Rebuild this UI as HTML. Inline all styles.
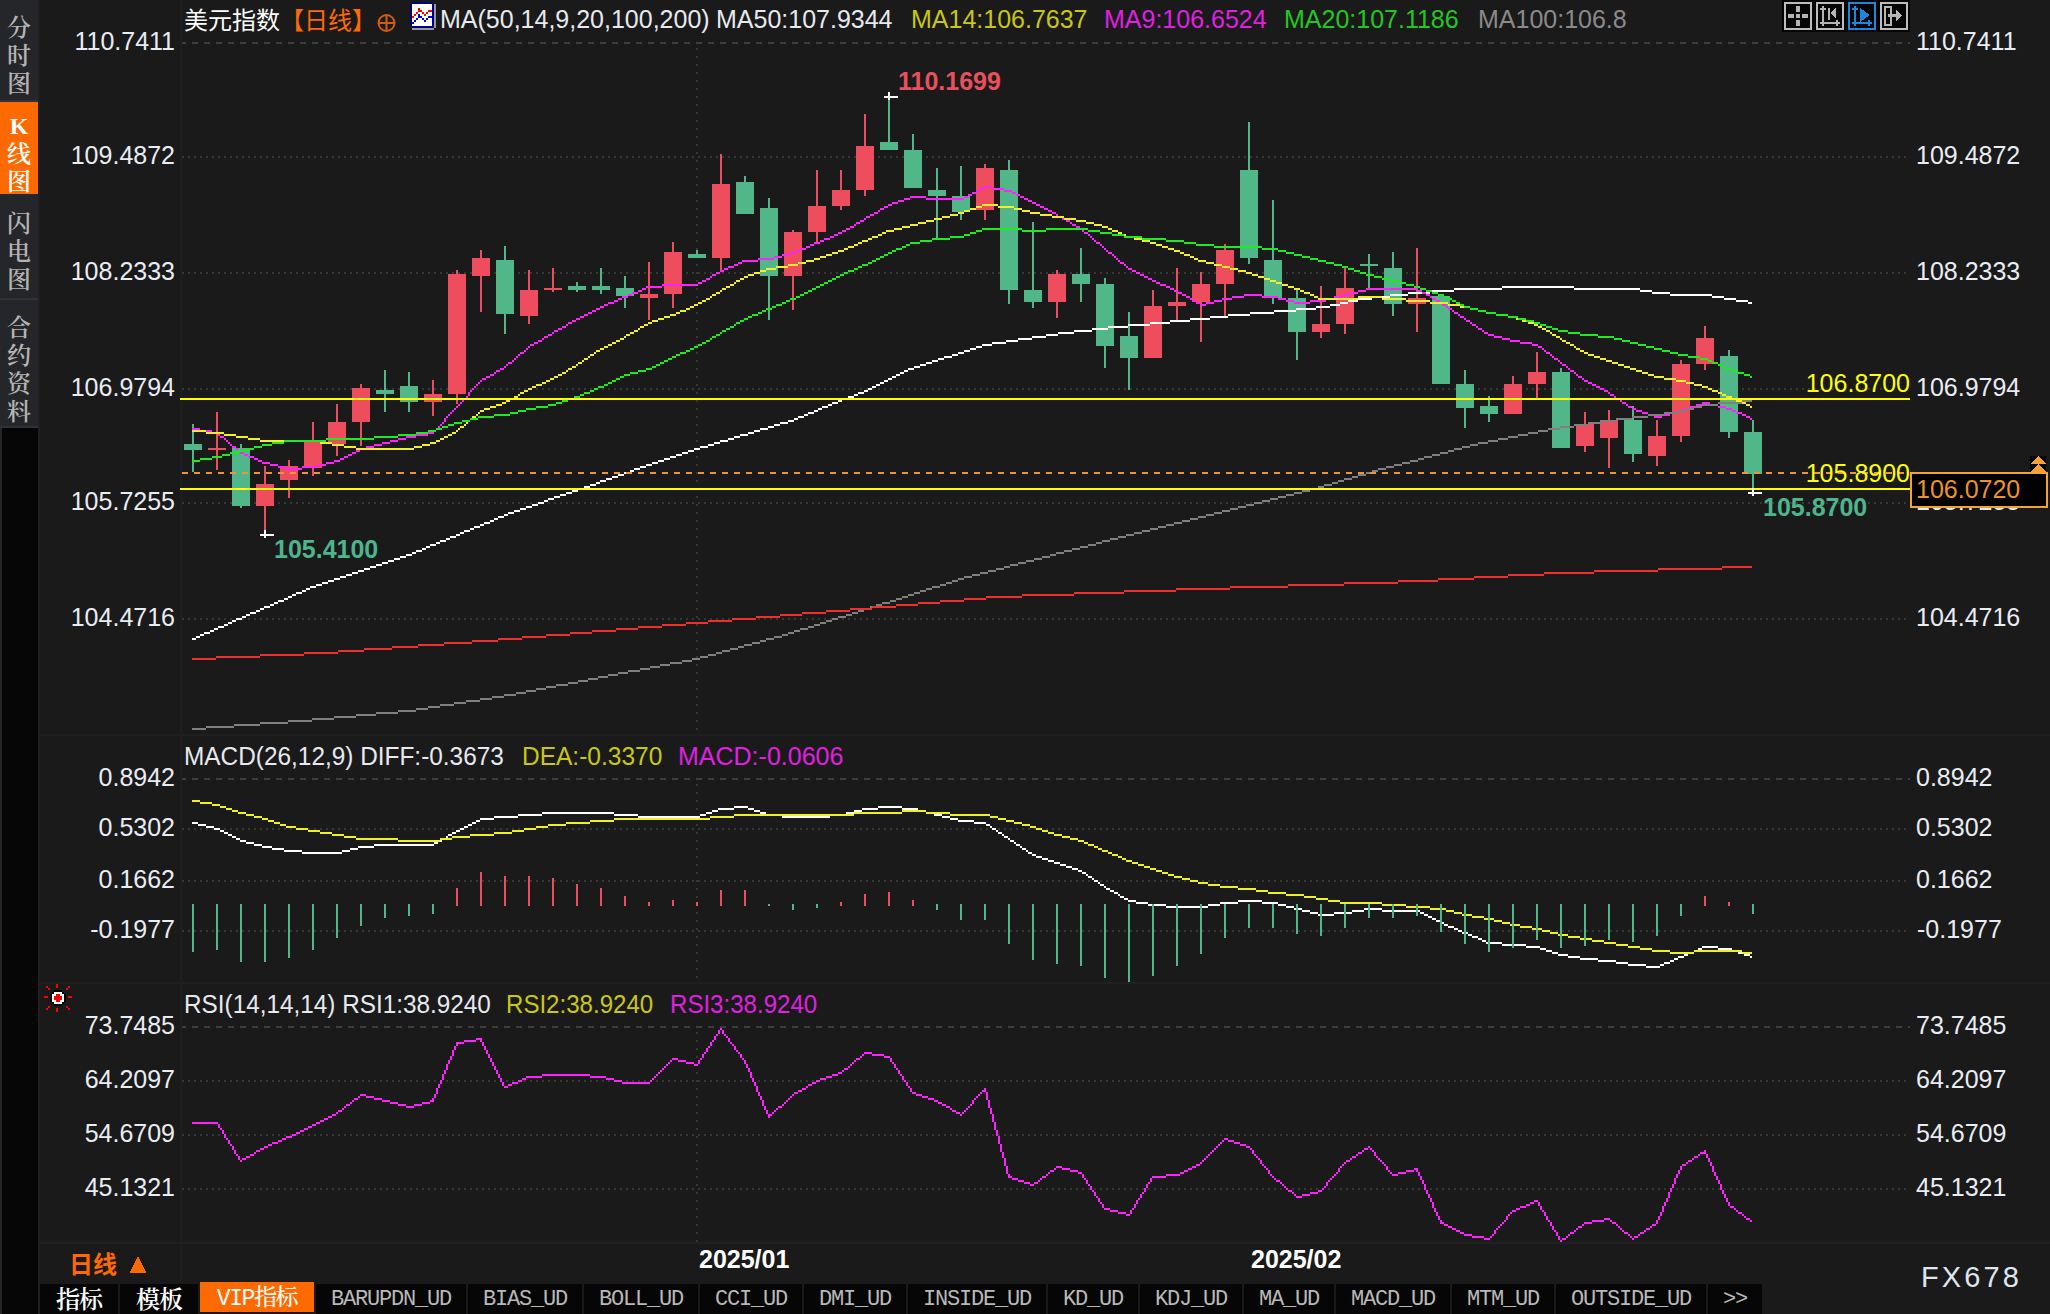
<!DOCTYPE html>
<html lang="zh-CN">
<head>
<meta charset="utf-8">
<title>美元指数 日线</title>
<style>
html,body{margin:0;padding:0;background:#1a1a1a;}
body{width:2050px;height:1314px;position:relative;overflow:hidden;font-family:"Liberation Sans","Noto Sans CJK SC",sans-serif;}
#side{position:absolute;left:0;top:0;width:38px;height:1314px;background:#25262a;border-right:2px solid #202020;}
#side .blk{position:absolute;left:2px;top:428px;width:36px;height:886px;background:#060606;}
.sb{position:absolute;left:0;width:38px;background:#25262a;border-bottom:2px solid #303136;}
.sb.act{background:#ff6a00;border-bottom:none;}
.vg{position:absolute;left:0;width:38px;line-height:28px;text-align:center;font-size:24px;font-weight:600;word-break:break-all;overflow-wrap:anywhere;font-family:"Liberation Serif","Noto Serif CJK SC",serif;}
svg{position:absolute;left:0;top:0;}
svg text{font-family:"Liberation Sans","Noto Sans CJK SC",sans-serif;}
#chart{shape-rendering:crispEdges;}
#bar{position:absolute;left:40px;top:1282px;width:2010px;height:32px;background:#1a1a1a;}
.tab{position:absolute;top:1284px;height:30px;line-height:32px;text-align:center;background:#060606;color:#b8b8b8;white-space:nowrap;overflow:hidden;}
.tab.en,.mono{font-family:"Liberation Mono","Noto Sans CJK SC",monospace;font-size:22px;letter-spacing:-1.2px;}
.tab.cn{font-family:"Liberation Serif","Noto Serif CJK SC",serif;font-size:24px;font-weight:600;color:#fff;letter-spacing:-1px;}
.tab.vip{top:1282px;height:30px;line-height:35px;background:#ff6a00;color:#fff;font-family:"Liberation Mono","Noto Serif CJK SC",serif;font-size:23px;font-weight:500;letter-spacing:-1.4px;}
#title{position:absolute;left:184px;top:3.5px;height:34px;line-height:34px;font-size:24px;color:#fff;white-space:nowrap;font-family:"Liberation Sans","Noto Sans CJK SC",sans-serif;}
#title b{font-weight:normal;color:#ff6a00;}
#period{position:absolute;left:69px;top:1248px;height:34px;line-height:34px;font-size:24px;font-weight:bold;color:#ff6a00;font-family:"Liberation Sans","Noto Sans CJK SC",sans-serif;}
#pbox{position:absolute;left:1910px;top:472px;width:130px;height:32px;border:2px solid #f4a236;background:#000;color:#ee9228;font-size:25px;line-height:31px;padding-left:4px;box-sizing:content-box;}
#wm{position:absolute;left:1921px;top:1257px;font-size:29px;letter-spacing:3.1px;color:#dfe5ee;line-height:40px;}
</style>
</head>
<body>
<div id="side"><div class="blk"></div>
<div class="sb" style="top:0;height:100px"></div>
<div class="sb act" style="top:102px;height:92px"></div>
<div class="sb" style="top:196px;height:102px"></div>
<div class="sb" style="top:300px;height:126px"></div>
<div class="vg" style="top:13.5px;color:#b4b4b4">分时图</div>
<div class="vg" style="top:111.5px;color:#ffffff">K线图</div>
<div class="vg" style="top:210.0px;color:#b4b4b4">闪电图</div>
<div class="vg" style="top:313.5px;color:#b4b4b4">合约资料</div>
</div>
<svg id="chart" width="2050" height="1314" viewBox="0 0 2050 1314">
<line x1="180" y1="43" x2="1910" y2="43" stroke="#3d3d3d" stroke-width="2" stroke-dasharray="6 6"/>
<line x1="182" y1="157" x2="1908" y2="157" stroke="#373737" stroke-width="2" stroke-dasharray="2 4"/>
<line x1="182" y1="273" x2="1908" y2="273" stroke="#373737" stroke-width="2" stroke-dasharray="2 4"/>
<line x1="182" y1="389" x2="1908" y2="389" stroke="#373737" stroke-width="2" stroke-dasharray="2 4"/>
<line x1="182" y1="503" x2="1908" y2="503" stroke="#373737" stroke-width="2" stroke-dasharray="2 4"/>
<line x1="182" y1="619" x2="1908" y2="619" stroke="#373737" stroke-width="2" stroke-dasharray="2 4"/>
<line x1="180" y1="779" x2="1910" y2="779" stroke="#3d3d3d" stroke-width="2" stroke-dasharray="6 6"/>
<line x1="182" y1="829" x2="1908" y2="829" stroke="#373737" stroke-width="2" stroke-dasharray="2 4"/>
<line x1="182" y1="881" x2="1908" y2="881" stroke="#373737" stroke-width="2" stroke-dasharray="2 4"/>
<line x1="182" y1="931" x2="1908" y2="931" stroke="#373737" stroke-width="2" stroke-dasharray="2 4"/>
<line x1="180" y1="1027" x2="1910" y2="1027" stroke="#3d3d3d" stroke-width="2" stroke-dasharray="6 6"/>
<line x1="182" y1="1081" x2="1908" y2="1081" stroke="#373737" stroke-width="2" stroke-dasharray="2 4"/>
<line x1="182" y1="1135" x2="1908" y2="1135" stroke="#373737" stroke-width="2" stroke-dasharray="2 4"/>
<line x1="182" y1="1189" x2="1908" y2="1189" stroke="#373737" stroke-width="2" stroke-dasharray="2 4"/>
<line x1="697" y1="48" x2="697" y2="732" stroke="#373737" stroke-width="2" stroke-dasharray="2 6"/>
<line x1="697" y1="784" x2="697" y2="982" stroke="#373737" stroke-width="2" stroke-dasharray="2 6"/>
<line x1="697" y1="1032" x2="697" y2="1242" stroke="#373737" stroke-width="2" stroke-dasharray="2 6"/>
<rect x="40" y="734" width="2010" height="2" fill="#202020"/>
<rect x="40" y="982" width="2010" height="2" fill="#202020"/>
<rect x="40" y="1242" width="2010" height="2" fill="#202020"/>
<rect x="180" y="0" width="2" height="1282" fill="#1e1e1e"/>
<rect x="192" y="424" width="2" height="48" fill="#52b788"/>
<rect x="184" y="444" width="18" height="6" fill="#52b788"/>
<rect x="216" y="412" width="2" height="58" fill="#ee4d5d"/>
<rect x="208" y="448" width="18" height="2" fill="#ee4d5d"/>
<rect x="240" y="444" width="2" height="64" fill="#52b788"/>
<rect x="232" y="448" width="18" height="58" fill="#52b788"/>
<rect x="264" y="466" width="2" height="68" fill="#ee4d5d"/>
<rect x="256" y="484" width="18" height="22" fill="#ee4d5d"/>
<rect x="288" y="460" width="2" height="38" fill="#ee4d5d"/>
<rect x="280" y="466" width="18" height="14" fill="#ee4d5d"/>
<rect x="312" y="422" width="2" height="54" fill="#ee4d5d"/>
<rect x="304" y="442" width="18" height="26" fill="#ee4d5d"/>
<rect x="336" y="404" width="2" height="52" fill="#ee4d5d"/>
<rect x="328" y="422" width="18" height="22" fill="#ee4d5d"/>
<rect x="360" y="384" width="2" height="62" fill="#ee4d5d"/>
<rect x="352" y="388" width="18" height="34" fill="#ee4d5d"/>
<rect x="384" y="370" width="2" height="42" fill="#52b788"/>
<rect x="376" y="390" width="18" height="4" fill="#52b788"/>
<rect x="408" y="372" width="2" height="40" fill="#52b788"/>
<rect x="400" y="386" width="18" height="16" fill="#52b788"/>
<rect x="432" y="380" width="2" height="36" fill="#ee4d5d"/>
<rect x="424" y="394" width="18" height="8" fill="#ee4d5d"/>
<rect x="456" y="270" width="2" height="134" fill="#ee4d5d"/>
<rect x="448" y="274" width="18" height="120" fill="#ee4d5d"/>
<rect x="480" y="250" width="2" height="62" fill="#ee4d5d"/>
<rect x="472" y="258" width="18" height="18" fill="#ee4d5d"/>
<rect x="504" y="246" width="2" height="88" fill="#52b788"/>
<rect x="496" y="260" width="18" height="54" fill="#52b788"/>
<rect x="528" y="270" width="2" height="54" fill="#ee4d5d"/>
<rect x="520" y="290" width="18" height="26" fill="#ee4d5d"/>
<rect x="552" y="268" width="2" height="24" fill="#ee4d5d"/>
<rect x="544" y="288" width="18" height="2" fill="#ee4d5d"/>
<rect x="576" y="282" width="2" height="10" fill="#52b788"/>
<rect x="568" y="286" width="18" height="4" fill="#52b788"/>
<rect x="600" y="268" width="2" height="26" fill="#52b788"/>
<rect x="592" y="286" width="18" height="4" fill="#52b788"/>
<rect x="624" y="276" width="2" height="32" fill="#52b788"/>
<rect x="616" y="288" width="18" height="8" fill="#52b788"/>
<rect x="648" y="262" width="2" height="58" fill="#ee4d5d"/>
<rect x="640" y="294" width="18" height="4" fill="#ee4d5d"/>
<rect x="672" y="242" width="2" height="66" fill="#ee4d5d"/>
<rect x="664" y="252" width="18" height="42" fill="#ee4d5d"/>
<rect x="696" y="250" width="2" height="8" fill="#52b788"/>
<rect x="688" y="254" width="18" height="4" fill="#52b788"/>
<rect x="720" y="154" width="2" height="116" fill="#ee4d5d"/>
<rect x="712" y="184" width="18" height="74" fill="#ee4d5d"/>
<rect x="744" y="176" width="2" height="38" fill="#52b788"/>
<rect x="736" y="182" width="18" height="32" fill="#52b788"/>
<rect x="768" y="198" width="2" height="122" fill="#52b788"/>
<rect x="760" y="208" width="18" height="68" fill="#52b788"/>
<rect x="792" y="230" width="2" height="80" fill="#ee4d5d"/>
<rect x="784" y="232" width="18" height="44" fill="#ee4d5d"/>
<rect x="816" y="170" width="2" height="74" fill="#ee4d5d"/>
<rect x="808" y="206" width="18" height="26" fill="#ee4d5d"/>
<rect x="840" y="170" width="2" height="40" fill="#ee4d5d"/>
<rect x="832" y="190" width="18" height="16" fill="#ee4d5d"/>
<rect x="864" y="114" width="2" height="82" fill="#ee4d5d"/>
<rect x="856" y="146" width="18" height="44" fill="#ee4d5d"/>
<rect x="888" y="94" width="2" height="56" fill="#52b788"/>
<rect x="880" y="142" width="18" height="8" fill="#52b788"/>
<rect x="912" y="134" width="2" height="54" fill="#52b788"/>
<rect x="904" y="150" width="18" height="38" fill="#52b788"/>
<rect x="936" y="168" width="2" height="70" fill="#52b788"/>
<rect x="928" y="190" width="18" height="6" fill="#52b788"/>
<rect x="960" y="166" width="2" height="54" fill="#52b788"/>
<rect x="952" y="196" width="18" height="16" fill="#52b788"/>
<rect x="984" y="164" width="2" height="56" fill="#ee4d5d"/>
<rect x="976" y="168" width="18" height="42" fill="#ee4d5d"/>
<rect x="1008" y="160" width="2" height="144" fill="#52b788"/>
<rect x="1000" y="170" width="18" height="120" fill="#52b788"/>
<rect x="1032" y="222" width="2" height="86" fill="#52b788"/>
<rect x="1024" y="290" width="18" height="12" fill="#52b788"/>
<rect x="1056" y="270" width="2" height="48" fill="#ee4d5d"/>
<rect x="1048" y="274" width="18" height="28" fill="#ee4d5d"/>
<rect x="1080" y="248" width="2" height="54" fill="#52b788"/>
<rect x="1072" y="274" width="18" height="10" fill="#52b788"/>
<rect x="1104" y="278" width="2" height="90" fill="#52b788"/>
<rect x="1096" y="284" width="18" height="62" fill="#52b788"/>
<rect x="1128" y="312" width="2" height="78" fill="#52b788"/>
<rect x="1120" y="336" width="18" height="22" fill="#52b788"/>
<rect x="1152" y="290" width="2" height="68" fill="#ee4d5d"/>
<rect x="1144" y="306" width="18" height="52" fill="#ee4d5d"/>
<rect x="1176" y="268" width="2" height="52" fill="#ee4d5d"/>
<rect x="1168" y="302" width="18" height="4" fill="#ee4d5d"/>
<rect x="1200" y="272" width="2" height="70" fill="#ee4d5d"/>
<rect x="1192" y="284" width="18" height="18" fill="#ee4d5d"/>
<rect x="1224" y="244" width="2" height="72" fill="#ee4d5d"/>
<rect x="1216" y="250" width="18" height="34" fill="#ee4d5d"/>
<rect x="1248" y="122" width="2" height="142" fill="#52b788"/>
<rect x="1240" y="170" width="18" height="88" fill="#52b788"/>
<rect x="1272" y="200" width="2" height="104" fill="#52b788"/>
<rect x="1264" y="260" width="18" height="38" fill="#52b788"/>
<rect x="1296" y="290" width="2" height="70" fill="#52b788"/>
<rect x="1288" y="298" width="18" height="34" fill="#52b788"/>
<rect x="1320" y="286" width="2" height="52" fill="#ee4d5d"/>
<rect x="1312" y="324" width="18" height="8" fill="#ee4d5d"/>
<rect x="1344" y="266" width="2" height="68" fill="#ee4d5d"/>
<rect x="1336" y="288" width="18" height="36" fill="#ee4d5d"/>
<rect x="1368" y="254" width="2" height="34" fill="#52b788"/>
<rect x="1360" y="264" width="18" height="2" fill="#52b788"/>
<rect x="1392" y="252" width="2" height="64" fill="#52b788"/>
<rect x="1384" y="268" width="18" height="36" fill="#52b788"/>
<rect x="1416" y="248" width="2" height="84" fill="#ee4d5d"/>
<rect x="1408" y="298" width="18" height="6" fill="#ee4d5d"/>
<rect x="1440" y="296" width="2" height="88" fill="#52b788"/>
<rect x="1432" y="296" width="18" height="88" fill="#52b788"/>
<rect x="1464" y="370" width="2" height="58" fill="#52b788"/>
<rect x="1456" y="384" width="18" height="24" fill="#52b788"/>
<rect x="1488" y="396" width="2" height="26" fill="#52b788"/>
<rect x="1480" y="406" width="18" height="8" fill="#52b788"/>
<rect x="1512" y="376" width="2" height="38" fill="#ee4d5d"/>
<rect x="1504" y="384" width="18" height="30" fill="#ee4d5d"/>
<rect x="1536" y="352" width="2" height="46" fill="#ee4d5d"/>
<rect x="1528" y="372" width="18" height="12" fill="#ee4d5d"/>
<rect x="1560" y="368" width="2" height="80" fill="#52b788"/>
<rect x="1552" y="372" width="18" height="76" fill="#52b788"/>
<rect x="1584" y="412" width="2" height="40" fill="#ee4d5d"/>
<rect x="1576" y="424" width="18" height="22" fill="#ee4d5d"/>
<rect x="1608" y="410" width="2" height="58" fill="#ee4d5d"/>
<rect x="1600" y="420" width="18" height="18" fill="#ee4d5d"/>
<rect x="1632" y="406" width="2" height="56" fill="#52b788"/>
<rect x="1624" y="420" width="18" height="34" fill="#52b788"/>
<rect x="1656" y="420" width="2" height="46" fill="#ee4d5d"/>
<rect x="1648" y="436" width="18" height="20" fill="#ee4d5d"/>
<rect x="1680" y="360" width="2" height="82" fill="#ee4d5d"/>
<rect x="1672" y="364" width="18" height="72" fill="#ee4d5d"/>
<rect x="1704" y="326" width="2" height="44" fill="#ee4d5d"/>
<rect x="1696" y="338" width="18" height="26" fill="#ee4d5d"/>
<rect x="1728" y="350" width="2" height="88" fill="#52b788"/>
<rect x="1720" y="356" width="18" height="76" fill="#52b788"/>
<rect x="1752" y="420" width="2" height="72" fill="#52b788"/>
<rect x="1744" y="432" width="18" height="42" fill="#52b788"/>
<path transform="scale(2)" d="M96 319.5h2M98 318.5h2M100 317.5h2M102 316.5h3M105 315.5h2M107 314.5h2M109 313.5h3M112 312.5h2M114 311.5h2M116 310.5h2M118 309.5h3M121 308.5h2M123 307.5h2M125 306.5h3M128 305.5h2M130 304.5h2M132 303.5h3M135 302.5h2M137 301.5h2M139 300.5h3M142 299.5h2M144 298.5h2M146 297.5h2M148 296.5h3M151 295.5h2M153 294.5h2M155 293.5h3M158 292.5h3M161 291.5h3M164 290.5h3M167 289.5h3M170 288.5h3M173 287.5h3M176 286.5h3M179 285.5h3M182 284.5h3M185 283.5h3M188 282.5h3M191 281.5h3M194 280.5h3M197 279.5h3M200 278.5h3M203 277.5h3M206 276.5h2M208 275.5h3M211 274.5h2M213 273.5h2M215 272.5h3M218 271.5h2M220 270.5h3M223 269.5h2M225 268.5h3M228 267.5h2M230 266.5h2M232 265.5h3M235 264.5h2M237 263.5h3M240 262.5h2M242 261.5h3M245 260.5h2M247 259.5h2M249 258.5h3M252 257.5h2M254 256.5h3M257 255.5h3M260 254.5h3M263 253.5h3M266 252.5h3M269 251.5h3M272 250.5h2M274 249.5h3M277 248.5h3M280 247.5h3M283 246.5h3M286 245.5h3M289 244.5h3M292 243.5h3M295 242.5h3M298 241.5h2M300 240.5h3M303 239.5h3M306 238.5h3M309 237.5h3M312 236.5h3M315 235.5h2M317 234.5h3M320 233.5h3M323 232.5h3M326 231.5h3M329 230.5h3M332 229.5h3M335 228.5h3M338 227.5h3M341 226.5h3M344 225.5h3M347 224.5h3M350 223.5h4M354 222.5h3M357 221.5h3M360 220.5h4M364 219.5h3M367 218.5h3M370 217.5h4M374 216.5h3M377 215.5h3M380 214.5h4M384 213.5h3M387 212.5h3M390 211.5h4M394 210.5h3M397 209.5h2M399 208.5h3M402 207.5h2M404 206.5h3M407 205.5h2M409 204.5h2M411 203.5h3M414 202.5h2M416 201.5h3M419 200.5h2M421 199.5h3M424 198.5h3M427 197.5h2M429 196.5h3M432 195.5h2M434 194.5h2M436 193.5h2M438 192.5h2M440 191.5h2M442 190.5h2M444 189.5h2M446 188.5h2M448 187.5h2M450 186.5h2M452 185.5h2M454 184.5h3M457 183.5h3M460 182.5h3M463 181.5h3M466 180.5h3M469 179.5h3M472 178.5h4M476 177.5h3M479 176.5h3M482 175.5h3M485 174.5h3M488 173.5h3M491 172.5h5M496 171.5h7M503 170.5h6M509 169.5h7M516 168.5h7M523 167.5h6M529 166.5h8M537 165.5h9M546 164.5h8M554 163.5h10M564 162.5h11M575 161.5h10M585 160.5h10M595 159.5h10M605 158.5h9M614 157.5h11M625 156.5h12M637 155.5h11M648 154.5h10M658 153.5h7M665 152.5h5M670 151.5h4M674 150.5h5M679 149.5h7M686 148.5h9M695 147.5h9M704 146.5h11M715 145.5h12M727 144.5h24M751 143.5h36M787 144.5h33M820 145.5h6M826 146.5h9M835 147.5h21M856 148.5h6M862 149.5h6M868 150.5h6M874 151.5h2" fill="none" stroke="#ffffff" stroke-width="1"/>
<path transform="scale(2)" d="M96 214.5h4M100 215.5h6M106 216.5h3M109 217.5h1M110 218.5h2M112 219.5h1M113 220.5h1M114 221.5h1M115 222.5h1M116 223.5h2M118 224.5h1M119 225.5h1M120 226.5h2M122 227.5h2M124 228.5h3M127 229.5h2M129 230.5h2M131 231.5h4M135 232.5h4M139 233.5h4M143 234.5h8M151 233.5h8M159 232.5h4M163 231.5h4M167 230.5h3M170 229.5h2M172 228.5h2M174 227.5h2M176 226.5h2M178 225.5h2M180 224.5h3M183 223.5h4M187 222.5h4M191 221.5h4M195 220.5h4M199 219.5h4M203 218.5h5M208 217.5h6M214 216.5h3M217 215.5h1M218 214.5h1M219 213.5h1M220 212.5h1M221 211.5h1M222.5 209v2M223 208.5h1M224 207.5h1M225 206.5h1M226 205.5h1M227 204.5h1M228 203.5h1M229 202.5h1M230 201.5h1M231 200.5h1M232 199.5h1M233 198.5h1M234.5 196v2M235 195.5h1M236 194.5h1M237 193.5h1M238 192.5h1M239 191.5h1M240 190.5h1M241 189.5h2M243 188.5h2M245 187.5h2M247 186.5h1M248 185.5h2M250 184.5h2M252 183.5h1M253 182.5h1M254 181.5h2M256 180.5h1M257 179.5h1M258 178.5h1M259 177.5h1M260 176.5h2M262 175.5h1M263 174.5h1M264 173.5h1M265 172.5h2M267 171.5h2M269 170.5h2M271 169.5h1M272 168.5h2M274 167.5h2M276 166.5h1M277 165.5h2M279 164.5h2M281 163.5h2M283 162.5h1M284 161.5h2M286 160.5h2M288 159.5h2M290 158.5h2M292 157.5h2M294 156.5h2M296 155.5h2M298 154.5h2M300 153.5h2M302 152.5h2M304 151.5h3M307 150.5h2M309 149.5h2M311 148.5h3M314 147.5h2M316 146.5h3M319 145.5h2M321 144.5h2M323 143.5h8M331 142.5h18M349 141.5h2M351 140.5h2M353 139.5h2M355 138.5h1M356 137.5h2M358 136.5h2M360 135.5h2M362 134.5h2M364 133.5h3M367 132.5h2M369 131.5h2M371 130.5h8M379 129.5h8M387 128.5h4M391 127.5h4M395 126.5h3M398 125.5h2M400 124.5h3M403 123.5h2M405 122.5h2M407 121.5h3M410 120.5h2M412 119.5h3M415 118.5h2M417 117.5h2M419 116.5h2M421 115.5h2M423 114.5h2M425 113.5h2M427 112.5h1M428 111.5h2M430 110.5h2M432 109.5h1M433 108.5h2M435 107.5h2M437 106.5h2M439 105.5h1M440 104.5h2M442 103.5h2M444 102.5h2M446 101.5h3M449 100.5h3M452 99.5h3M455 98.5h8M463 99.5h19M482 98.5h2M484 97.5h2M486 96.5h2M488 95.5h2M490 94.5h2M492 93.5h4M496 94.5h6M502 95.5h4M506 96.5h2M508 97.5h2M510 98.5h2M512 99.5h2M514 100.5h2M516 101.5h2M518 102.5h2M520 103.5h2M522 104.5h2M524 105.5h2M526 106.5h2M528 107.5h1M529 108.5h2M531 109.5h2M533 110.5h2M535 111.5h1M536 112.5h2M538 113.5h2M540 114.5h1M541 115.5h1M542 116.5h2M544 117.5h1M545 118.5h1M546 119.5h1M547 120.5h1M548 121.5h2M550 122.5h1M551 123.5h1M552 124.5h1M553 125.5h1M554 126.5h2M556 127.5h1M557 128.5h1M558 129.5h1M559 130.5h1M560 131.5h2M562 132.5h1M563 133.5h1M564 134.5h2M566 135.5h2M568 136.5h2M570 137.5h2M572 138.5h2M574 139.5h2M576 140.5h2M578 141.5h2M580 142.5h3M583 143.5h2M585 144.5h2M587 145.5h2M589 146.5h2M591 147.5h2M593 148.5h2M595 149.5h1M596 150.5h2M598 151.5h2M600 152.5h3M603 151.5h4M607 150.5h4M611 149.5h5M616 148.5h6M622 147.5h9M631 148.5h8M639 149.5h4M643 150.5h4M647 151.5h8M655 150.5h8M663 149.5h4M667 148.5h4M671 147.5h4M675 146.5h4M679 145.5h4M683 144.5h26M709 145.5h2M711 146.5h2M713 147.5h2M715 148.5h1M716 149.5h2M718 150.5h2M720 151.5h1M721 152.5h2M723 153.5h1M724 154.5h2M726 155.5h1M727 156.5h2M729 157.5h1M730 158.5h2M732 159.5h1M733 160.5h2M735 161.5h1M736 162.5h2M738 163.5h1M739 164.5h2M741 165.5h1M742 166.5h2M744 167.5h3M747 168.5h4M751 169.5h4M755 170.5h5M760 171.5h6M766 172.5h3M769 173.5h2M771 174.5h1M772 175.5h1M773 176.5h2M775 177.5h1M776 178.5h1M777 179.5h2M779 180.5h1M780 181.5h1M781 182.5h2M783 183.5h1M784 184.5h1M785 185.5h2M787 186.5h1M788 187.5h1M789 188.5h2M791 189.5h1M792 190.5h2M794 191.5h2M796 192.5h2M798 193.5h2M800 194.5h2M802 195.5h2M804 196.5h1M805 197.5h2M807 198.5h1M808 199.5h2M810 200.5h1M811 201.5h2M813 202.5h1M814 203.5h2M816 204.5h2M818 205.5h3M821 206.5h3M824 207.5h3M827 208.5h4M831 207.5h4M835 206.5h4M839 205.5h3M842 204.5h3M845 203.5h3M848 202.5h3M851 201.5h4M855 202.5h4M859 203.5h4M863 204.5h3M866 205.5h2M868 206.5h3M871 207.5h2M873 208.5h2M875 209.5h1" fill="none" stroke="#ff22ff" stroke-width="1"/>
<path transform="scale(2)" d="M96 215.5h7M103 216.5h9M112 217.5h6M118 218.5h6M124 219.5h6M130 220.5h30M160 221.5h6M166 222.5h6M172 223.5h6M178 224.5h29M207 223.5h4M211 222.5h4M215 221.5h3M218 220.5h2M220 219.5h2M222 218.5h2M224 217.5h2M226 216.5h2M228 215.5h1M229 214.5h1M230 213.5h2M232 212.5h1M233 211.5h1M234 210.5h1M235 209.5h1M236 208.5h2M238 207.5h1M239 206.5h1M240 205.5h2M242 204.5h3M245 203.5h3M248 202.5h3M251 201.5h2M253 200.5h2M255 199.5h2M257 198.5h2M259 197.5h1M260 196.5h2M262 195.5h2M264 194.5h2M266 193.5h2M268 192.5h3M271 191.5h2M273 190.5h2M275 189.5h2M277 188.5h2M279 187.5h2M281 186.5h2M283 185.5h1M284 184.5h2M286 183.5h2M288 182.5h1M289 181.5h2M291 180.5h1M292 179.5h2M294 178.5h1M295 177.5h2M297 176.5h1M298 175.5h2M300 174.5h2M302 173.5h2M304 172.5h2M306 171.5h2M308 170.5h2M310 169.5h2M312 168.5h1M313 167.5h2M315 166.5h2M317 165.5h2M319 164.5h1M320 163.5h2M322 162.5h2M324 161.5h2M326 160.5h3M329 159.5h3M332 158.5h3M335 157.5h3M338 156.5h2M340 155.5h3M343 154.5h2M345 153.5h2M347 152.5h2M349 151.5h2M351 150.5h2M353 149.5h2M355 148.5h1M356 147.5h2M358 146.5h2M360 145.5h1M361 144.5h2M363 143.5h2M365 142.5h2M367 141.5h1M368 140.5h2M370 139.5h2M372 138.5h2M374 137.5h3M377 136.5h3M380 135.5h3M383 134.5h5M388 133.5h6M394 132.5h5M399 131.5h4M403 130.5h4M407 129.5h3M410 128.5h3M413 127.5h3M416 126.5h3M419 125.5h3M422 124.5h2M424 123.5h3M427 122.5h2M429 121.5h2M431 120.5h3M434 119.5h2M436 118.5h3M439 117.5h2M441 116.5h2M443 115.5h4M447 114.5h4M451 113.5h4M455 112.5h4M459 111.5h4M463 110.5h4M467 109.5h4M471 108.5h4M475 107.5h4M479 106.5h3M482 105.5h3M485 104.5h3M488 103.5h3M491 102.5h8M499 103.5h8M507 104.5h4M511 105.5h4M515 106.5h5M520 107.5h6M526 108.5h6M532 109.5h6M538 110.5h5M543 111.5h4M547 112.5h4M551 113.5h3M554 114.5h2M556 115.5h3M559 116.5h2M561 117.5h2M563 118.5h4M567 119.5h4M571 120.5h4M575 121.5h3M578 122.5h3M581 123.5h3M584 124.5h3M587 125.5h3M590 126.5h2M592 127.5h3M595 128.5h2M597 129.5h2M599 130.5h4M603 131.5h4M607 132.5h4M611 133.5h4M615 134.5h4M619 135.5h4M623 136.5h3M626 137.5h3M629 138.5h3M632 139.5h3M635 140.5h3M638 141.5h3M641 142.5h3M644 143.5h3M647 144.5h3M650 145.5h2M652 146.5h3M655 147.5h2M657 148.5h2M659 149.5h20M679 148.5h12M691 149.5h12M703 150.5h12M715 151.5h9M724 152.5h6M730 153.5h5M735 154.5h4M739 155.5h4M743 156.5h5M748 157.5h6M754 158.5h4M758 159.5h3M761 160.5h3M764 161.5h3M767 162.5h2M769 163.5h2M771 164.5h2M773 165.5h2M775 166.5h1M776 167.5h2M778 168.5h2M780 169.5h1M781 170.5h2M783 171.5h2M785 172.5h2M787 173.5h1M788 174.5h2M790 175.5h2M792 176.5h2M794 177.5h3M797 178.5h3M800 179.5h3M803 180.5h3M806 181.5h3M809 182.5h3M812 183.5h3M815 184.5h3M818 185.5h3M821 186.5h3M824 187.5h3M827 188.5h5M832 189.5h6M838 190.5h5M843 191.5h4M847 192.5h4M851 193.5h3M854 194.5h2M856 195.5h3M859 196.5h2M861 197.5h2M863 198.5h3M866 199.5h2M868 200.5h3M871 201.5h2M873 202.5h2M875 203.5h1" fill="none" stroke="#f2ee2a" stroke-width="1"/>
<path transform="scale(2)" d="M96 230.5h4M100 229.5h6M106 228.5h5M111 227.5h4M115 226.5h4M119 225.5h4M123 224.5h4M127 223.5h4M131 222.5h5M136 221.5h6M142 220.5h21M163 219.5h24M187 218.5h12M199 217.5h9M208 216.5h6M214 215.5h4M218 214.5h3M221 213.5h3M224 212.5h3M227 211.5h4M231 210.5h4M235 209.5h4M239 208.5h8M247 207.5h8M255 206.5h4M259 205.5h4M263 204.5h5M268 203.5h6M274 202.5h4M278 201.5h3M281 200.5h3M284 199.5h3M287 198.5h3M290 197.5h2M292 196.5h3M295 195.5h2M297 194.5h2M299 193.5h3M302 192.5h2M304 191.5h2M306 190.5h2M308 189.5h2M310 188.5h2M312 187.5h3M315 186.5h4M319 185.5h4M323 184.5h3M326 183.5h2M328 182.5h2M330 181.5h2M332 180.5h2M334 179.5h2M336 178.5h2M338 177.5h2M340 176.5h3M343 175.5h2M345 174.5h2M347 173.5h2M349 172.5h2M351 171.5h2M353 170.5h2M355 169.5h1M356 168.5h2M358 167.5h2M360 166.5h1M361 165.5h2M363 164.5h2M365 163.5h2M367 162.5h1M368 161.5h2M370 160.5h2M372 159.5h2M374 158.5h2M376 157.5h3M379 156.5h2M381 155.5h2M383 154.5h3M386 153.5h2M388 152.5h3M391 151.5h2M393 150.5h2M395 149.5h3M398 148.5h2M400 147.5h2M402 146.5h2M404 145.5h2M406 144.5h2M408 143.5h2M410 142.5h2M412 141.5h2M414 140.5h2M416 139.5h2M418 138.5h2M420 137.5h2M422 136.5h2M424 135.5h3M427 134.5h2M429 133.5h2M431 132.5h3M434 131.5h2M436 130.5h2M438 129.5h2M440 128.5h2M442 127.5h2M444 126.5h2M446 125.5h2M448 124.5h3M451 123.5h2M453 122.5h2M455 121.5h5M460 120.5h6M466 119.5h9M475 118.5h7M482 117.5h3M485 116.5h3M488 115.5h3M491 114.5h20M511 115.5h12M523 114.5h21M544 115.5h6M550 116.5h6M556 117.5h6M562 118.5h9M571 119.5h12M583 120.5h9M592 121.5h6M598 122.5h9M607 123.5h24M631 124.5h8M639 125.5h4M643 126.5h4M647 127.5h4M651 128.5h4M655 129.5h4M659 130.5h4M663 131.5h4M667 132.5h4M671 133.5h3M674 134.5h3M677 135.5h3M680 136.5h3M683 137.5h4M687 138.5h4M691 139.5h4M695 140.5h4M699 141.5h4M703 142.5h4M707 143.5h3M710 144.5h3M713 145.5h3M716 146.5h3M719 147.5h3M722 148.5h2M724 149.5h2M726 150.5h2M728 151.5h2M730 152.5h2M732 153.5h3M735 154.5h4M739 155.5h4M743 156.5h5M748 157.5h6M754 158.5h5M759 159.5h4M763 160.5h4M767 161.5h3M770 162.5h3M773 163.5h3M776 164.5h3M779 165.5h5M784 166.5h6M790 167.5h9M799 168.5h8M807 169.5h4M811 170.5h4M815 171.5h4M819 172.5h4M823 173.5h4M827 174.5h4M831 175.5h4M835 176.5h4M839 177.5h5M844 178.5h6M850 179.5h4M854 180.5h2M856 181.5h3M859 182.5h2M861 183.5h2M863 184.5h3M866 185.5h3M869 186.5h3M872 187.5h3M875 188.5h1" fill="none" stroke="#1eeb1e" stroke-width="1"/>
<path transform="scale(2)" d="M96 364.5h7M103 363.5h14M117 362.5h13M130 361.5h14M144 360.5h12M156 359.5h11M167 358.5h11M178 357.5h10M188 356.5h11M199 355.5h9M208 354.5h6M214 353.5h6M220 352.5h7M227 351.5h6M233 350.5h7M240 349.5h6M246 348.5h6M252 347.5h6M258 346.5h5M263 345.5h5M268 344.5h5M273 343.5h5M278 342.5h6M284 341.5h5M289 340.5h5M294 339.5h5M299 338.5h5M304 337.5h5M309 336.5h5M314 335.5h6M320 334.5h5M325 333.5h5M330 332.5h5M335 331.5h6M341 330.5h5M346 329.5h4M350 328.5h4M354 327.5h4M358 326.5h3M361 325.5h4M365 324.5h4M369 323.5h3M372 322.5h4M376 321.5h4M380 320.5h3M383 319.5h4M387 318.5h4M391 317.5h3M394 316.5h3M397 315.5h3M400 314.5h4M404 313.5h3M407 312.5h3M410 311.5h3M413 310.5h3M416 309.5h3M419 308.5h4M423 307.5h3M426 306.5h3M429 305.5h3M432 304.5h3M435 303.5h3M438 302.5h3M441 301.5h4M445 300.5h3M448 299.5h3M451 298.5h3M454 297.5h3M457 296.5h3M460 295.5h3M463 294.5h3M466 293.5h4M470 292.5h3M473 291.5h3M476 290.5h3M479 289.5h3M482 288.5h4M486 287.5h4M490 286.5h4M494 285.5h4M498 284.5h4M502 283.5h3M505 282.5h4M509 281.5h4M513 280.5h4M517 279.5h4M521 278.5h4M525 277.5h3M528 276.5h4M532 275.5h4M536 274.5h4M540 273.5h4M544 272.5h4M548 271.5h3M551 270.5h4M555 269.5h4M559 268.5h4M563 267.5h4M567 266.5h4M571 265.5h4M575 264.5h4M579 263.5h4M583 262.5h4M587 261.5h4M591 260.5h4M595 259.5h4M599 258.5h4M603 257.5h4M607 256.5h4M611 255.5h4M615 254.5h4M619 253.5h4M623 252.5h4M627 251.5h4M631 250.5h4M635 249.5h4M639 248.5h4M643 247.5h4M647 246.5h4M651 245.5h4M655 244.5h4M659 243.5h3M662 242.5h4M666 241.5h3M669 240.5h3M672 239.5h4M676 238.5h3M679 237.5h4M683 236.5h3M686 235.5h3M689 234.5h4M693 233.5h4M697 232.5h4M701 231.5h4M705 230.5h4M709 229.5h3M712 228.5h4M716 227.5h4M720 226.5h4M724 225.5h3M727 224.5h4M731 223.5h4M735 222.5h4M739 221.5h5M744 220.5h5M749 219.5h5M754 218.5h5M759 217.5h5M764 216.5h5M769 215.5h5M774 214.5h6M780 213.5h7M787 212.5h7M794 211.5h7M801 210.5h7M808 209.5h8M816 208.5h8M824 207.5h8M832 206.5h7M839 205.5h4M843 204.5h4M847 203.5h4M851 202.5h8M859 201.5h12M871 200.5h5" fill="none" stroke="#808080" stroke-width="1"/>
<path transform="scale(2)" d="M96 329.5h12M108 328.5h22M130 327.5h22M152 326.5h17M169 325.5h13M182 324.5h14M196 323.5h13M209 322.5h13M222 321.5h14M236 320.5h13M249 319.5h12M261 318.5h12M273 317.5h12M285 316.5h11M296 315.5h12M308 314.5h11M319 313.5h12M331 312.5h12M343 311.5h11M354 310.5h12M366 309.5h12M378 308.5h12M390 307.5h11M401 306.5h12M413 305.5h12M425 304.5h11M436 303.5h12M448 302.5h11M459 301.5h11M470 300.5h12M482 299.5h11M493 298.5h18M511 297.5h26M537 296.5h25M562 295.5h26M588 294.5h27M615 293.5h29M644 292.5h28M672 291.5h27M699 290.5h20M719 289.5h18M737 288.5h17M754 287.5h18M772 286.5h25M797 285.5h32M829 284.5h32M861 283.5h15" fill="none" stroke="#f03030" stroke-width="1"/>
<rect x="180" y="398" width="1730" height="2" fill="#ffff00"/>
<rect x="180" y="488" width="1730" height="2" fill="#ffff00"/>
<line x1="182" y1="473" x2="1910" y2="473" stroke="#f0943a" stroke-width="2" stroke-dasharray="6 6"/>
<rect x="884" y="96" width="14" height="2" fill="#fff"/><rect x="888" y="92" width="2" height="8" fill="#fff"/>
<rect x="260" y="534" width="14" height="2" fill="#fff"/><rect x="264" y="530" width="2" height="8" fill="#fff"/>
<rect x="1748" y="492" width="14" height="2" fill="#fff"/><rect x="1752" y="488" width="2" height="8" fill="#fff"/>
<path transform="scale(2)" d="M96 411.5h3M99 412.5h4M103 413.5h4M107 414.5h3M110 415.5h2M112 416.5h2M114 417.5h2M116 418.5h2M118 419.5h2M120 420.5h3M123 421.5h4M127 422.5h4M131 423.5h5M136 424.5h6M142 425.5h9M151 426.5h20M171 425.5h4M175 424.5h4M179 423.5h8M187 422.5h30M217 421.5h2M219 420.5h2M221 419.5h2M223 418.5h1M224 417.5h2M226 416.5h2M228 415.5h2M230 414.5h2M232 413.5h2M234 412.5h2M236 411.5h2M238 410.5h2M240 409.5h7M247 408.5h12M259 407.5h12M271 406.5h36M307 407.5h12M319 408.5h31M350 407.5h3M353 406.5h3M356 405.5h3M359 404.5h8M367 403.5h7M374 404.5h3M377 405.5h3M380 406.5h3M383 407.5h8M391 408.5h24M415 407.5h8M423 406.5h4M427 405.5h4M431 404.5h8M439 403.5h12M451 404.5h8M459 405.5h4M463 406.5h4M467 407.5h4M471 408.5h4M475 409.5h4M479 410.5h8M487 411.5h6M493 412.5h2M495 413.5h1M496 414.5h2M498 415.5h1M499 416.5h2M501 417.5h1M502 418.5h2M504 419.5h1M505 420.5h2M507 421.5h1M508 422.5h2M510 423.5h1M511 424.5h2M513 425.5h1M514 426.5h2M516 427.5h2M518 428.5h3M521 429.5h3M524 430.5h3M527 431.5h3M530 432.5h3M533 433.5h3M536 434.5h3M539 435.5h2M541 436.5h2M543 437.5h1M544 438.5h2M546 439.5h1M547 440.5h2M549 441.5h1M550 442.5h2M552 443.5h1M553 444.5h2M555 445.5h2M557 446.5h2M559 447.5h1M560 448.5h2M562 449.5h2M564 450.5h4M568 451.5h6M574 452.5h9M583 453.5h21M604 452.5h6M610 451.5h9M619 450.5h12M631 451.5h8M639 452.5h4M643 453.5h4M647 454.5h4M651 455.5h4M655 456.5h4M659 457.5h8M667 456.5h9M676 455.5h6M682 454.5h9M691 455.5h19M710 456.5h2M712 457.5h2M714 458.5h2M716 459.5h2M718 460.5h2M720 461.5h2M722 462.5h2M724 463.5h3M727 464.5h2M729 465.5h2M731 466.5h3M734 467.5h2M736 468.5h3M739 469.5h2M741 470.5h2M743 471.5h8M751 472.5h12M763 473.5h7M770 474.5h3M773 475.5h3M776 476.5h3M779 477.5h5M784 478.5h6M790 479.5h9M799 480.5h9M808 481.5h6M814 482.5h9M823 483.5h7M830 482.5h2M832 481.5h3M835 480.5h2M837 479.5h2M839 478.5h3M842 477.5h2M844 476.5h3M847 475.5h2M849 474.5h2M851 473.5h8M859 474.5h7M866 475.5h3M869 476.5h3M872 477.5h3M875 478.5h1" fill="none" stroke="#ffffff" stroke-width="1"/>
<path transform="scale(2)" d="M96 400.5h4M100 401.5h6M106 402.5h4M110 403.5h3M113 404.5h3M116 405.5h3M119 406.5h4M123 407.5h4M127 408.5h4M131 409.5h3M134 410.5h3M137 411.5h3M140 412.5h3M143 413.5h5M148 414.5h6M154 415.5h6M160 416.5h6M166 417.5h6M172 418.5h6M178 419.5h21M199 420.5h21M220 419.5h6M226 418.5h9M235 417.5h12M247 416.5h9M256 415.5h6M262 414.5h6M268 413.5h6M274 412.5h9M283 411.5h12M295 410.5h12M307 409.5h48M355 408.5h12M367 407.5h60M427 406.5h24M451 405.5h12M463 406.5h12M475 407.5h20M495 408.5h4M499 409.5h4M503 410.5h4M507 411.5h4M511 412.5h4M515 413.5h3M518 414.5h3M521 415.5h3M524 416.5h3M527 417.5h4M531 418.5h4M535 419.5h4M539 420.5h3M542 421.5h2M544 422.5h3M547 423.5h2M549 424.5h2M551 425.5h3M554 426.5h2M556 427.5h3M559 428.5h2M561 429.5h2M563 430.5h3M566 431.5h3M569 432.5h3M572 433.5h3M575 434.5h3M578 435.5h3M581 436.5h3M584 437.5h3M587 438.5h4M591 439.5h4M595 440.5h4M599 441.5h5M604 442.5h6M610 443.5h9M619 444.5h9M628 445.5h6M634 446.5h9M643 447.5h9M652 448.5h6M658 449.5h6M664 450.5h6M670 451.5h21M691 452.5h12M703 453.5h12M715 454.5h8M723 455.5h4M727 456.5h4M731 457.5h5M736 458.5h6M742 459.5h5M747 460.5h4M751 461.5h4M755 462.5h5M760 463.5h6M766 464.5h5M771 465.5h4M775 466.5h4M779 467.5h5M784 468.5h6M790 469.5h6M796 470.5h6M802 471.5h6M808 472.5h6M814 473.5h6M820 474.5h6M826 475.5h9M835 476.5h12M847 475.5h24M871 476.5h5" fill="none" stroke="#f0f020" stroke-width="1"/>
<rect x="192" y="904" width="2" height="48" fill="#52b788"/>
<rect x="216" y="904" width="2" height="46" fill="#52b788"/>
<rect x="240" y="904" width="2" height="58" fill="#52b788"/>
<rect x="264" y="904" width="2" height="58" fill="#52b788"/>
<rect x="288" y="904" width="2" height="54" fill="#52b788"/>
<rect x="312" y="904" width="2" height="46" fill="#52b788"/>
<rect x="336" y="904" width="2" height="34" fill="#52b788"/>
<rect x="360" y="904" width="2" height="22" fill="#52b788"/>
<rect x="384" y="904" width="2" height="14" fill="#52b788"/>
<rect x="408" y="904" width="2" height="12" fill="#52b788"/>
<rect x="432" y="904" width="2" height="10" fill="#52b788"/>
<rect x="456" y="888" width="2" height="18" fill="#ee4d5d"/>
<rect x="480" y="872" width="2" height="34" fill="#ee4d5d"/>
<rect x="504" y="876" width="2" height="30" fill="#ee4d5d"/>
<rect x="528" y="876" width="2" height="30" fill="#ee4d5d"/>
<rect x="552" y="878" width="2" height="28" fill="#ee4d5d"/>
<rect x="576" y="884" width="2" height="22" fill="#ee4d5d"/>
<rect x="600" y="888" width="2" height="18" fill="#ee4d5d"/>
<rect x="624" y="896" width="2" height="10" fill="#ee4d5d"/>
<rect x="648" y="902" width="2" height="4" fill="#ee4d5d"/>
<rect x="672" y="900" width="2" height="6" fill="#ee4d5d"/>
<rect x="696" y="902" width="2" height="4" fill="#ee4d5d"/>
<rect x="720" y="890" width="2" height="16" fill="#ee4d5d"/>
<rect x="744" y="890" width="2" height="16" fill="#ee4d5d"/>
<rect x="768" y="904" width="2" height="2" fill="#52b788"/>
<rect x="792" y="904" width="2" height="6" fill="#52b788"/>
<rect x="816" y="904" width="2" height="4" fill="#52b788"/>
<rect x="840" y="902" width="2" height="4" fill="#ee4d5d"/>
<rect x="864" y="894" width="2" height="12" fill="#ee4d5d"/>
<rect x="888" y="892" width="2" height="14" fill="#ee4d5d"/>
<rect x="912" y="900" width="2" height="6" fill="#ee4d5d"/>
<rect x="936" y="904" width="2" height="6" fill="#52b788"/>
<rect x="960" y="904" width="2" height="16" fill="#52b788"/>
<rect x="984" y="904" width="2" height="16" fill="#52b788"/>
<rect x="1008" y="904" width="2" height="40" fill="#52b788"/>
<rect x="1032" y="904" width="2" height="56" fill="#52b788"/>
<rect x="1056" y="904" width="2" height="60" fill="#52b788"/>
<rect x="1080" y="904" width="2" height="62" fill="#52b788"/>
<rect x="1104" y="904" width="2" height="74" fill="#52b788"/>
<rect x="1128" y="904" width="2" height="78" fill="#52b788"/>
<rect x="1152" y="904" width="2" height="72" fill="#52b788"/>
<rect x="1176" y="904" width="2" height="62" fill="#52b788"/>
<rect x="1200" y="904" width="2" height="50" fill="#52b788"/>
<rect x="1224" y="904" width="2" height="34" fill="#52b788"/>
<rect x="1248" y="904" width="2" height="24" fill="#52b788"/>
<rect x="1272" y="904" width="2" height="24" fill="#52b788"/>
<rect x="1296" y="904" width="2" height="30" fill="#52b788"/>
<rect x="1320" y="904" width="2" height="32" fill="#52b788"/>
<rect x="1344" y="904" width="2" height="24" fill="#52b788"/>
<rect x="1368" y="904" width="2" height="14" fill="#52b788"/>
<rect x="1392" y="904" width="2" height="14" fill="#52b788"/>
<rect x="1416" y="904" width="2" height="12" fill="#52b788"/>
<rect x="1440" y="904" width="2" height="28" fill="#52b788"/>
<rect x="1464" y="904" width="2" height="40" fill="#52b788"/>
<rect x="1488" y="904" width="2" height="48" fill="#52b788"/>
<rect x="1512" y="904" width="2" height="44" fill="#52b788"/>
<rect x="1536" y="904" width="2" height="36" fill="#52b788"/>
<rect x="1560" y="904" width="2" height="44" fill="#52b788"/>
<rect x="1584" y="904" width="2" height="42" fill="#52b788"/>
<rect x="1608" y="904" width="2" height="36" fill="#52b788"/>
<rect x="1632" y="904" width="2" height="38" fill="#52b788"/>
<rect x="1656" y="904" width="2" height="32" fill="#52b788"/>
<rect x="1680" y="904" width="2" height="12" fill="#52b788"/>
<rect x="1704" y="896" width="2" height="10" fill="#ee4d5d"/>
<rect x="1728" y="902" width="2" height="4" fill="#ee4d5d"/>
<rect x="1752" y="904" width="2" height="10" fill="#52b788"/>
<path transform="scale(2)" d="M96 561.5h13M109.5 562v2M110 564.5h1M111.5 565v2M112.5 567v2M113 569.5h1M114.5 570v2M115 572.5h1M116.5 573v2M117.5 575v2M118 577.5h1M119.5 578v2M120 580.5h1M121 579.5h2M123 578.5h2M125 577.5h2M127 576.5h1M128 575.5h2M130 574.5h2M132 573.5h2M134 572.5h2M136 571.5h3M139 570.5h2M141 569.5h2M143 568.5h3M146 567.5h2M148 566.5h2M150 565.5h2M152 564.5h2M154 563.5h2M156 562.5h2M158 561.5h2M160 560.5h2M162 559.5h2M164 558.5h2M166 557.5h2M168 556.5h1M169 555.5h2M171 554.5h1M172 553.5h1M173 552.5h2M175 551.5h1M176 550.5h1M177 549.5h2M179 548.5h1M180 547.5h3M183 548.5h4M187 549.5h4M191 550.5h4M195 551.5h4M199 552.5h4M203 553.5h4M207 552.5h4M211 551.5h4M215 550.5h2M216 549.5h1M217.5 547v2M218.5 544v3M219.5 542v2M220.5 540v2M221.5 537v3M222.5 535v2M223.5 532v3M224.5 530v2M225.5 528v2M226.5 525v3M227.5 523v2M228.5 521v2M229 521.5h3M232 520.5h6M238 519.5h3M240 520.5h1M241.5 521v2M242.5 523v2M243.5 525v2M244.5 527v2M245.5 529v2M246.5 531v2M247.5 533v2M248.5 535v2M249.5 537v2M250.5 539v2M251.5 541v2M252 543.5h2M254 542.5h2M256 541.5h3M259 540.5h2M261 539.5h2M263 538.5h8M271 537.5h24M295 538.5h8M303 539.5h4M307 540.5h4M311 541.5h14M325 540.5h1M326 539.5h1M327 538.5h1M328 537.5h1M329 536.5h1M330 535.5h1M331 534.5h1M332 533.5h1M333 532.5h1M334 531.5h1M335 530.5h1M336 529.5h3M339 530.5h4M343 531.5h4M347 532.5h2M349.5 530v2M350 529.5h1M351.5 527v2M352 526.5h1M353.5 524v2M354 523.5h1M355.5 521v2M356 520.5h1M357.5 518v2M358 517.5h1M359.5 515v2M360 514.5h1M361.5 515v2M362 517.5h1M363 518.5h1M364.5 519v2M365 521.5h1M366 522.5h1M367.5 523v2M368 525.5h1M369 526.5h1M370.5 527v2M371 529.5h1M372.5 530v2M373.5 532v2M374.5 534v2M375.5 536v3M376.5 539v2M377.5 541v2M378.5 543v3M379.5 546v2M380.5 548v2M381.5 550v3M382.5 553v2M383.5 555v2M384.5 557v2M385 557.5h1M386 556.5h1M387 555.5h1M388 554.5h1M389 553.5h2M391 552.5h1M392 551.5h1M393 550.5h1M394 549.5h1M395 548.5h1M396 547.5h1M397 546.5h2M399 545.5h2M401 544.5h2M403 543.5h1M404 542.5h2M406 541.5h2M408 540.5h2M410 539.5h3M413 538.5h3M416 537.5h3M419 536.5h2M421 535.5h1M422 534.5h2M424 533.5h1M425 532.5h1M426 531.5h1M427 530.5h1M428 529.5h2M430 528.5h1M431 527.5h1M432 526.5h4M436 527.5h6M442 528.5h3M445.5 529v2M446 531.5h1M447.5 532v2M448 534.5h1M449.5 535v2M450 537.5h1M451.5 538v2M452 540.5h1M453.5 541v2M454 543.5h1M455.5 544v2M456 546.5h2M458 547.5h3M461 548.5h3M464 549.5h3M467 550.5h2M469 551.5h2M471 552.5h2M473 553.5h2M475 554.5h1M476 555.5h2M478 556.5h2M480 557.5h1M481 556.5h1M482 555.5h1M483 554.5h1M484 553.5h1M485 552.5h1M486.5 550v2M487 549.5h1M488 548.5h1M489 547.5h1M490 546.5h1M491 545.5h1M492.5 544v2M493.5 546v4M494.5 550v4M495.5 554v3M496.5 557v4M497.5 561v4M498.5 565v3M499.5 568v4M500.5 572v4M501.5 576v3M502.5 579v4M503.5 583v4M504.5 587v2M505 588.5h1M506 589.5h3M509 590.5h3M512 591.5h3M515 592.5h2M517 591.5h2M519 590.5h1M520 589.5h1M521 588.5h2M523 587.5h1M524 586.5h1M525 585.5h2M527 584.5h1M528 583.5h3M531 584.5h4M535 585.5h4M539 586.5h2M541.5 587v2M542 589.5h1M543.5 590v2M544 592.5h1M545.5 593v2M546 595.5h1M547.5 596v2M548 598.5h1M549.5 599v2M550 601.5h1M551.5 602v2M552 604.5h3M555 605.5h4M559 606.5h4M563 607.5h2M565.5 605v2M566 604.5h1M567.5 602v2M568.5 600v2M569 599.5h1M570.5 597v2M571 596.5h1M572.5 594v2M573.5 592v2M574 591.5h1M575.5 589v2M576 588.5h7M583 587.5h7M590 586.5h2M592 585.5h2M594 584.5h2M596 583.5h2M598 582.5h2M600 581.5h1M601 580.5h1M602 579.5h1M603 578.5h1M604 577.5h1M605 576.5h1M606 575.5h1M607 574.5h1M608 573.5h1M609 572.5h1M610 571.5h1M611 570.5h1M612 569.5h2M614 570.5h3M617 571.5h3M620 572.5h3M623 573.5h2M625 574.5h1M626.5 575v2M627 577.5h1M628 578.5h1M629 579.5h1M630.5 580v2M631 582.5h1M632 583.5h1M633 584.5h1M634.5 585v2M635 587.5h1M636 588.5h1M637 589.5h1M638 590.5h2M640 591.5h1M641 592.5h1M642 593.5h1M643 594.5h1M644 595.5h2M646 596.5h1M647 597.5h1M648 598.5h3M651 597.5h4M655 596.5h4M659 595.5h2M661 594.5h1M662 593.5h1M663.5 591v2M664 590.5h1M665 589.5h1M666 588.5h1M667 587.5h1M668 586.5h1M669.5 584v2M670 583.5h1M671 582.5h1M672 581.5h1M673 580.5h2M675 579.5h1M676 578.5h2M678 577.5h1M679 576.5h2M681 575.5h1M682 574.5h2M684 573.5h1M685 574.5h1M686 575.5h1M687.5 576v2M688 578.5h1M689 579.5h1M690 580.5h1M691 581.5h1M692 582.5h1M693.5 583v2M694 585.5h1M695 586.5h1M696 587.5h3M699 586.5h4M703 585.5h4M707 584.5h2M708 585.5h1M709.5 586v2M710.5 588v2M711.5 590v2M712.5 592v3M713.5 595v2M714.5 597v2M715.5 599v2M716.5 601v3M717.5 604v2M718.5 606v2M719.5 608v2M720.5 610v2M721 611.5h1M722 612.5h2M724 613.5h2M726 614.5h2M728 615.5h2M730 616.5h2M732 617.5h4M736 618.5h6M742 619.5h3M745 618.5h1M746 617.5h1M747.5 615v2M748 614.5h1M749 613.5h1M750 612.5h1M751 611.5h1M752 610.5h1M753.5 608v2M754 607.5h1M755 606.5h1M756 605.5h2M758 604.5h2M760 603.5h3M763 602.5h2M765 601.5h2M767 600.5h2M769.5 601v2M770.5 603v2M771 605.5h1M772.5 606v2M773.5 608v2M774 610.5h1M775.5 611v2M776.5 613v2M777 615.5h1M778.5 616v2M779.5 618v2M780 620.5h1M781 619.5h2M783 618.5h1M784 617.5h1M785 616.5h2M787 615.5h1M788 614.5h1M789 613.5h2M791 612.5h1M792 611.5h4M796 610.5h6M802 609.5h3M805 610.5h1M806 611.5h2M808 612.5h1M809 613.5h1M810 614.5h1M811 615.5h1M812 616.5h2M814 617.5h1M815 618.5h1M816 619.5h1M817 618.5h2M819 617.5h1M820 616.5h2M822 615.5h1M823 614.5h2M825 613.5h1M826 612.5h2M828.5 610v2M829.5 608v2M830.5 606v2M831.5 603v3M832.5 601v2M833.5 599v2M834.5 596v3M835.5 594v2M836.5 592v2M837.5 589v3M838.5 587v2M839.5 585v2M840.5 583v2M841 582.5h2M843 581.5h1M844 580.5h2M846 579.5h1M847 578.5h2M849 577.5h1M850 576.5h2M852.5 575v2M853.5 577v2M854.5 579v2M855.5 581v2M856.5 583v3M857.5 586v2M858.5 588v2M859.5 590v2M860.5 592v3M861.5 595v2M862.5 597v2M863.5 599v2M864.5 601v2M865 603.5h2M867 604.5h1M868 605.5h1M869 606.5h2M871 607.5h1M872 608.5h1M873 609.5h2M875 610.5h1" fill="none" stroke="#ff22ff" stroke-width="1"/>
</svg>
<svg id="labels" width="2050" height="1314" viewBox="0 0 2050 1314">
<text x="175" y="50" fill="#e9edf3" font-size="25" text-anchor="end" font-weight="normal" >110.7411</text>
<text x="1916" y="50" fill="#e9edf3" font-size="25" text-anchor="start" font-weight="normal" >110.7411</text>
<text x="175" y="164" fill="#e9edf3" font-size="25" text-anchor="end" font-weight="normal" >109.4872</text>
<text x="1916" y="164" fill="#e9edf3" font-size="25" text-anchor="start" font-weight="normal" >109.4872</text>
<text x="175" y="280" fill="#e9edf3" font-size="25" text-anchor="end" font-weight="normal" >108.2333</text>
<text x="1916" y="280" fill="#e9edf3" font-size="25" text-anchor="start" font-weight="normal" >108.2333</text>
<text x="175" y="396" fill="#e9edf3" font-size="25" text-anchor="end" font-weight="normal" >106.9794</text>
<text x="1916" y="396" fill="#e9edf3" font-size="25" text-anchor="start" font-weight="normal" >106.9794</text>
<text x="175" y="510" fill="#e9edf3" font-size="25" text-anchor="end" font-weight="normal" >105.7255</text>
<text x="175" y="626" fill="#e9edf3" font-size="25" text-anchor="end" font-weight="normal" >104.4716</text>
<text x="1916" y="626" fill="#e9edf3" font-size="25" text-anchor="start" font-weight="normal" >104.4716</text>
<text x="175" y="786" fill="#e9edf3" font-size="25" text-anchor="end" font-weight="normal" >0.8942</text>
<text x="1916" y="786" fill="#e9edf3" font-size="25" text-anchor="start" font-weight="normal" >0.8942</text>
<text x="175" y="836" fill="#e9edf3" font-size="25" text-anchor="end" font-weight="normal" >0.5302</text>
<text x="1916" y="836" fill="#e9edf3" font-size="25" text-anchor="start" font-weight="normal" >0.5302</text>
<text x="175" y="888" fill="#e9edf3" font-size="25" text-anchor="end" font-weight="normal" >0.1662</text>
<text x="1916" y="888" fill="#e9edf3" font-size="25" text-anchor="start" font-weight="normal" >0.1662</text>
<text x="175" y="938" fill="#e9edf3" font-size="25" text-anchor="end" font-weight="normal" >-0.1977</text>
<text x="1917" y="938" fill="#e9edf3" font-size="25" text-anchor="start" font-weight="normal" >-0.1977</text>
<text x="175" y="1034" fill="#e9edf3" font-size="25" text-anchor="end" font-weight="normal" >73.7485</text>
<text x="1916" y="1034" fill="#e9edf3" font-size="25" text-anchor="start" font-weight="normal" >73.7485</text>
<text x="175" y="1088" fill="#e9edf3" font-size="25" text-anchor="end" font-weight="normal" >64.2097</text>
<text x="1916" y="1088" fill="#e9edf3" font-size="25" text-anchor="start" font-weight="normal" >64.2097</text>
<text x="175" y="1142" fill="#e9edf3" font-size="25" text-anchor="end" font-weight="normal" >54.6709</text>
<text x="1916" y="1142" fill="#e9edf3" font-size="25" text-anchor="start" font-weight="normal" >54.6709</text>
<text x="175" y="1196" fill="#e9edf3" font-size="25" text-anchor="end" font-weight="normal" >45.1321</text>
<text x="1916" y="1196" fill="#e9edf3" font-size="25" text-anchor="start" font-weight="normal" >45.1321</text>
<text x="1916" y="510" fill="#e9edf3" font-size="25" text-anchor="start" font-weight="normal" >105.7255</text>
<text x="440" y="27.5" fill="#e6e9ee" font-size="25" text-anchor="start" font-weight="normal" >MA(50,14,9,20,100,200)</text>
<text x="716" y="27.5" fill="#e6e9ee" font-size="25" text-anchor="start" font-weight="normal" >MA50:107.9344</text>
<text x="911" y="27.5" fill="#c8c814" font-size="25" text-anchor="start" font-weight="normal" >MA14:106.7637</text>
<text x="1104" y="27.5" fill="#e020e0" font-size="25" text-anchor="start" font-weight="normal" >MA9:106.6524</text>
<text x="1284" y="27.5" fill="#22c822" font-size="25" text-anchor="start" font-weight="normal" >MA20:107.1186</text>
<text x="1478" y="27.5" fill="#8a8a8a" font-size="25" text-anchor="start" font-weight="normal" >MA100:106.8</text>
<text transform="translate(184,764.5) scale(0.976,1)" fill="#e6e9ee" font-size="25" text-anchor="start" font-weight="normal" >MACD(26,12,9) DIFF:-0.3673</text>
<text transform="translate(522,764.5) scale(0.98,1)" fill="#c8c814" font-size="25" text-anchor="start" font-weight="normal" >DEA:-0.3370</text>
<text x="678" y="764.5" fill="#e020e0" font-size="25" text-anchor="start" font-weight="normal" >MACD:-0.0606</text>
<text transform="translate(184,1012.5) scale(0.973,1)" fill="#e6e9ee" font-size="25" text-anchor="start" font-weight="normal" >RSI(14,14,14) RSI1:38.9240</text>
<text transform="translate(506,1012.5) scale(0.963,1)" fill="#c8c814" font-size="25" text-anchor="start" font-weight="normal" >RSI2:38.9240</text>
<text transform="translate(670,1012.5) scale(0.963,1)" fill="#e020e0" font-size="25" text-anchor="start" font-weight="normal" >RSI3:38.9240</text>
<text x="1910" y="391.5" fill="#ffff00" font-size="25" text-anchor="end" font-weight="normal" >106.8700</text>
<text x="1910" y="481.5" fill="#ffff00" font-size="25" text-anchor="end" font-weight="normal" >105.8900</text>
<text x="1763" y="516" fill="#4db58c" font-size="25" text-anchor="start" font-weight="bold" >105.8700</text>
<text x="274" y="558" fill="#4db58c" font-size="25" text-anchor="start" font-weight="bold" >105.4100</text>
<text x="898" y="90" fill="#e8505e" font-size="25" text-anchor="start" font-weight="bold" >110.1699</text>
<text x="699" y="1268" fill="#ffffff" font-size="25" text-anchor="start" font-weight="bold" >2025/01</text>
<text x="1251" y="1268" fill="#ffffff" font-size="25" text-anchor="start" font-weight="bold" >2025/02</text>
</svg>
<div id="title">美元指数<b>【日线】</b></div>
<svg id="icons" width="2050" height="1314" viewBox="0 0 2050 1314" shape-rendering="crispEdges">
<!-- circled plus -->
<g stroke="#d05c10" stroke-width="2" fill="none" shape-rendering="auto">
<circle cx="386.5" cy="23" r="8"/><line x1="378.5" y1="23" x2="394.5" y2="23"/><line x1="386.5" y1="15" x2="386.5" y2="31"/>
</g>
<!-- MA indicator icon -->
<rect x="434" y="4" width="2" height="24" fill="#9a9a9a"/><rect x="412" y="28" width="22" height="2" fill="#9a9a9a"/>
<rect x="412" y="2" width="20" height="26" fill="#00008b"/><rect x="410" y="4" width="24" height="22" fill="#00008b"/>
<rect x="412" y="4" width="20" height="22" fill="#ffffff"/>
<rect x="412" y="16" width="2" height="2" fill="#ff0000"/><rect x="414" y="14" width="2" height="2" fill="#ff0000"/><rect x="416" y="12" width="2" height="2" fill="#ff0000"/><rect x="418" y="8" width="2" height="2" fill="#ff0000"/><rect x="418" y="10" width="2" height="2" fill="#ff0000"/><rect x="420" y="10" width="2" height="2" fill="#ff0000"/><rect x="422" y="12" width="2" height="2" fill="#ff0000"/><rect x="424" y="14" width="2" height="2" fill="#ff0000"/><rect x="426" y="12" width="2" height="2" fill="#ff0000"/><rect x="428" y="10" width="2" height="2" fill="#ff0000"/><rect x="430" y="10" width="2" height="2" fill="#ff0000"/>
<rect x="412" y="22" width="2" height="2" fill="#0000ff"/><rect x="414" y="20" width="2" height="2" fill="#0000ff"/><rect x="416" y="18" width="2" height="2" fill="#0000ff"/><rect x="418" y="14" width="2" height="2" fill="#0000ff"/><rect x="418" y="16" width="2" height="2" fill="#0000ff"/><rect x="420" y="16" width="2" height="2" fill="#0000ff"/><rect x="422" y="18" width="2" height="2" fill="#0000ff"/><rect x="424" y="20" width="2" height="2" fill="#0000ff"/><rect x="426" y="18" width="2" height="2" fill="#0000ff"/><rect x="428" y="16" width="2" height="2" fill="#0000ff"/><rect x="430" y="16" width="2" height="2" fill="#0000ff"/>
<!-- top right tool icons -->
<rect x="1782" y="0" width="128" height="32" fill="#050505"/>
<g fill="none" stroke="#bcbcbc" stroke-width="2">
<rect x="1785" y="3" width="26" height="26"/>
<rect x="1817" y="3" width="26" height="26"/>
<rect x="1881" y="3" width="26" height="26"/>
</g>
<rect x="1849" y="3" width="26" height="26" fill="none" stroke="#1a88dc" stroke-width="2"/>
<g fill="#b4b4b4">
<rect x="1796" y="6" width="4" height="6"/><rect x="1796" y="20" width="4" height="6"/>
<rect x="1788" y="14" width="6" height="4"/><rect x="1802" y="14" width="6" height="4"/><rect x="1796" y="14" width="4" height="4"/>
<rect x="1822" y="6" width="2" height="20"/><rect x="1820" y="8" width="6" height="2"/>
<rect x="1820" y="22" width="20" height="2"/><rect x="1836" y="20" width="2" height="6"/>
<rect x="1828" y="8" width="2" height="12"/><polygon points="1830,13 1836,8 1836,18"/>
<rect x="1884" y="6" width="8" height="2"/><rect x="1884" y="24" width="8" height="2"/><rect x="1884" y="6" width="2" height="20"/><rect x="1890" y="6" width="2" height="20"/>
<rect x="1888" y="14" width="12" height="3"/><polygon points="1896,10 1902,15.5 1896,21"/>
</g>
<g fill="#1a88dc">
<rect x="1854" y="6" width="2" height="20"/><rect x="1852" y="8" width="6" height="2"/>
<rect x="1852" y="22" width="20" height="2"/><rect x="1868" y="20" width="2" height="6"/>
<polygon points="1860,8 1870,15 1860,22"/>
</g>
<!-- double arrow up by the price box -->
<rect x="2030" y="456" width="16" height="16" fill="#000"/>
<polygon points="2038,456 2046,464 2030,464" fill="#f4a236"/>
<polygon points="2038,464 2046,472 2030,472" fill="#f4a236"/>
<!-- RSI sun icon -->
<g fill="#000"><rect x="54" y="990" width="8" height="16"/><rect x="50" y="994" width="16" height="8"/><rect x="52" y="992" width="12" height="12"/></g>
<g fill="#fff"><rect x="54" y="992" width="8" height="12"/><rect x="52" y="994" width="12" height="8"/></g>
<g fill="#ff0000"><rect x="56" y="994" width="4" height="8"/><rect x="54" y="996" width="8" height="4"/>
<rect x="56" y="984" width="2" height="4"/><rect x="56" y="1008" width="2" height="4"/>
<rect x="44" y="996" width="4" height="2"/><rect x="68" y="996" width="4" height="2"/>
<rect x="46" y="986" width="2" height="2"/><rect x="48" y="988" width="2" height="2"/>
<rect x="68" y="986" width="2" height="2"/><rect x="66" y="988" width="2" height="2"/>
<rect x="48" y="1006" width="2" height="2"/><rect x="46" y="1008" width="2" height="2"/>
<rect x="66" y="1006" width="2" height="2"/><rect x="68" y="1008" width="2" height="2"/>
</g>
<!-- period triangle -->
<polygon points="138,1256 146.5,1272.5 130,1272.5" fill="#ff6a00"/>
</svg>
<div id="period">日线</div>
<div id="pbox">106.0720</div>
<div id="bar">
</div>
<div class="tab cn" style="left:40px;width:78px">指标</div>
<div class="tab cn" style="left:120px;width:78px">模板</div>
<div class="tab vip" style="left:200px;width:114px">VIP指标</div>
<div class="tab en" style="left:316px;width:150px">BARUPDN_UD</div>
<div class="tab en" style="left:468px;width:114px">BIAS_UD</div>
<div class="tab en" style="left:584px;width:114px">BOLL_UD</div>
<div class="tab en" style="left:700px;width:102px">CCI_UD</div>
<div class="tab en" style="left:804px;width:102px">DMI_UD</div>
<div class="tab en" style="left:908px;width:138px">INSIDE_UD</div>
<div class="tab en" style="left:1048px;width:90px">KD_UD</div>
<div class="tab en" style="left:1140px;width:102px">KDJ_UD</div>
<div class="tab en" style="left:1244px;width:90px">MA_UD</div>
<div class="tab en" style="left:1336px;width:114px">MACD_UD</div>
<div class="tab en" style="left:1452px;width:102px">MTM_UD</div>
<div class="tab en" style="left:1556px;width:150px">OUTSIDE_UD</div>
<div class="tab en" style="left:1708px;width:54px">&gt;&gt;</div>
<div id="wm">FX678</div>
</body>
</html>
